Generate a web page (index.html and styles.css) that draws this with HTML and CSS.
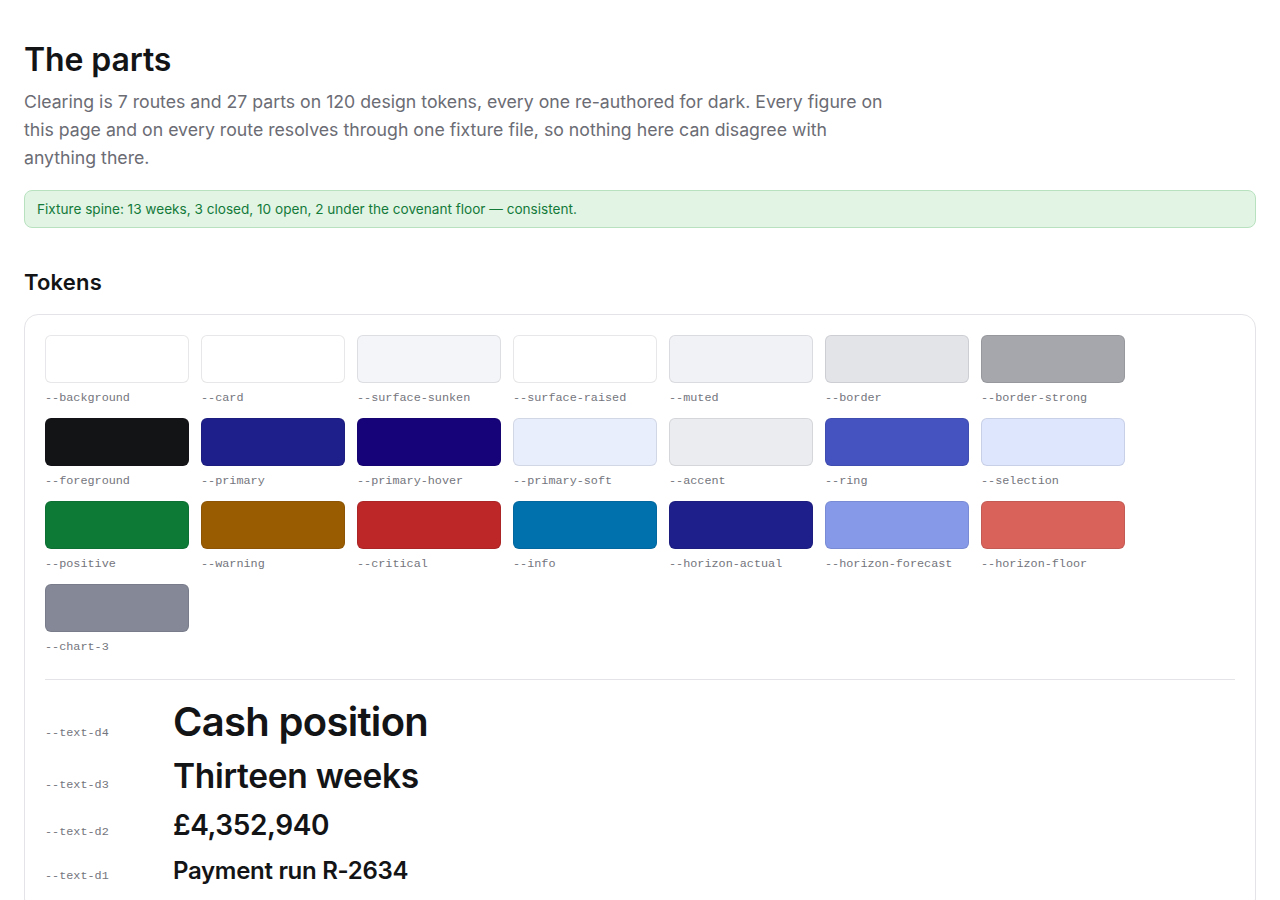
FILE: index.html
```html
<!DOCTYPE html>
<html lang="en">

<head>
    <meta charset="UTF-8">
    <meta name="viewport" content="width=device-width, initial-scale=1.0">
    <title>The parts</title>
    <link rel="stylesheet" href="styles.css">
</head>

<body>
    <main class="page">
        <h1>The parts</h1>
        <p class="lede">Clearing is 7 routes and 27 parts on 120 design tokens, every one re-authored for dark. Every figure on this page and on every route resolves through one fixture file, so nothing here can disagree with anything there.</p>

        <!-- Fixture check -->
        <div class="notice">Fixture spine: 13 weeks, 3 closed, 10 open, 2 under the covenant floor — consistent.</div>

        <h2>Tokens</h2>

        <section class="panel">
            <div class="swatches">
                <div class="swatch"><span class="chip bg-background"></span><code>--background</code></div>
                <div class="swatch"><span class="chip bg-card"></span><code>--card</code></div>
                <div class="swatch"><span class="chip bg-surface-sunken"></span><code>--surface-sunken</code></div>
                <div class="swatch"><span class="chip bg-surface-raised"></span><code>--surface-raised</code></div>
                <div class="swatch"><span class="chip bg-muted"></span><code>--muted</code></div>
                <div class="swatch"><span class="chip bg-border"></span><code>--border</code></div>
                <div class="swatch"><span class="chip bg-border-strong"></span><code>--border-strong</code></div>

                <div class="swatch"><span class="chip bg-foreground"></span><code>--foreground</code></div>
                <div class="swatch"><span class="chip bg-primary"></span><code>--primary</code></div>
                <div class="swatch"><span class="chip bg-primary-hover"></span><code>--primary-hover</code></div>
                <div class="swatch"><span class="chip bg-primary-soft"></span><code>--primary-soft</code></div>
                <div class="swatch"><span class="chip bg-accent"></span><code>--accent</code></div>
                <div class="swatch"><span class="chip bg-ring"></span><code>--ring</code></div>
                <div class="swatch"><span class="chip bg-selection"></span><code>--selection</code></div>

                <div class="swatch"><span class="chip bg-positive"></span><code>--positive</code></div>
                <div class="swatch"><span class="chip bg-warning"></span><code>--warning</code></div>
                <div class="swatch"><span class="chip bg-critical"></span><code>--critical</code></div>
                <div class="swatch"><span class="chip bg-info"></span><code>--info</code></div>
                <div class="swatch"><span class="chip bg-horizon-actual"></span><code>--horizon-actual</code></div>
                <div class="swatch"><span class="chip bg-horizon-forecast"></span><code>--horizon-forecast</code></div>
                <div class="swatch"><span class="chip bg-horizon-floor"></span><code>--horizon-floor</code></div>

                <div class="swatch"><span class="chip bg-chart-3"></span><code>--chart-3</code></div>
            </div>

            <hr class="rule">

            <!-- Type scale -->
            <div class="type-scale">
                <div class="type-row"><code>--text-d4</code><span class="text-d4">Cash position</span></div>
                <div class="type-row"><code>--text-d3</code><span class="text-d3">Thirteen weeks</span></div>
                <div class="type-row"><code>--text-d2</code><span class="text-d2">£4,352,940</span></div>
                <div class="type-row"><code>--text-d1</code><span class="text-d1">Payment run R-2634</span></div>
            </div>
        </section>
    </main>
</body>

</html>
```

FILE: styles.css
```css
body {
    font-family: Inter, 'Noto Sans', sans-serif;
    background-color: #ffffff;
    color: #131416;
    margin: 0;
    padding: 0;
}

.page {
    padding: 40px 24px 40px;
}

h1 {
    font-size: 32px;
    font-weight: 600;
    letter-spacing: -0.1px;
    line-height: 40px;
    margin: 0 0 8px;
}

.lede {
    font-size: 17.7px;
    line-height: 28px;
    color: #6b6c74;
    max-width: 868px;
    margin: 0 0 18px;
}

.notice {
    background-color: #e2f4e4;
    border: 1px solid #b8e2bf;
    border-radius: 8px;
    color: #137a3a;
    font-size: 13.6px;
    padding: 10px 12px;
    line-height: 16px;
}

h2 {
    font-size: 22px;
    font-weight: 600;
    letter-spacing: 0.2px;
    line-height: 28px;
    margin: 40px 0 18px;
}

.panel {
    border: 1px solid #e4e4e8;
    border-radius: 14px;
    padding: 20px;
}

.swatches {
    display: grid;
    grid-template-columns: repeat(auto-fill, 144px);
    column-gap: 12px;
    row-gap: 13px;
}

.swatch {
    display: flex;
    flex-direction: column;
    gap: 8px;
}

.chip {
    display: block;
    height: 46px;
    border: 1px solid rgba(20, 20, 40, 0.1);
    border-radius: 6px;
}

code {
    font-family: 'Liberation Mono', 'DejaVu Sans Mono', monospace;
    font-size: 11.8px;
    line-height: 14px;
    color: #74757d;
}

.rule {
    border: none;
    border-top: 1px solid #e4e4e8;
    margin: 25px 0 12px;
}

.type-row {
    display: flex;
    align-items: baseline;
}

.type-row code {
    width: 128px;
    flex-shrink: 0;
}

.text-d4 {
    font-size: 40px;
    font-weight: 600;
    letter-spacing: -0.7px;
    line-height: 60px;
}

.text-d3 {
    font-size: 33.5px;
    font-weight: 600;
    letter-spacing: -0.3px;
    line-height: 48px;
}

.text-d2 {
    font-size: 28px;
    font-weight: 600;
    letter-spacing: -0.4px;
    line-height: 50px;
}

.text-d1 {
    font-size: 24px;
    font-weight: 600;
    letter-spacing: -0.3px;
    line-height: 42px;
}

/* token colours */
.bg-background { background-color: #ffffff; }
.bg-card { background-color: #ffffff; }
.bg-surface-sunken { background-color: #f4f5f8; }
.bg-surface-raised { background-color: #ffffff; }
.bg-muted { background-color: #f1f2f5; }
.bg-border { background-color: #e3e4e8; }
.bg-border-strong { background-color: #a6a7ac; }
.bg-foreground { background-color: #131416; }
.bg-primary { background-color: #1e1f8a; }
.bg-primary-hover { background-color: #16037a; }
.bg-primary-soft { background-color: #e8eefc; }
.bg-accent { background-color: #ebecef; }
.bg-ring { background-color: #4453c0; }
.bg-selection { background-color: #dde6fd; }
.bg-positive { background-color: #0d7a36; }
.bg-warning { background-color: #9a5c00; }
.bg-critical { background-color: #bd2727; }
.bg-info { background-color: #0071ad; }
.bg-horizon-actual { background-color: #1e1f8a; }
.bg-horizon-forecast { background-color: #8599e8; }
.bg-horizon-floor { background-color: #d9625a; }
.bg-chart-3 { background-color: #858896; }
```
